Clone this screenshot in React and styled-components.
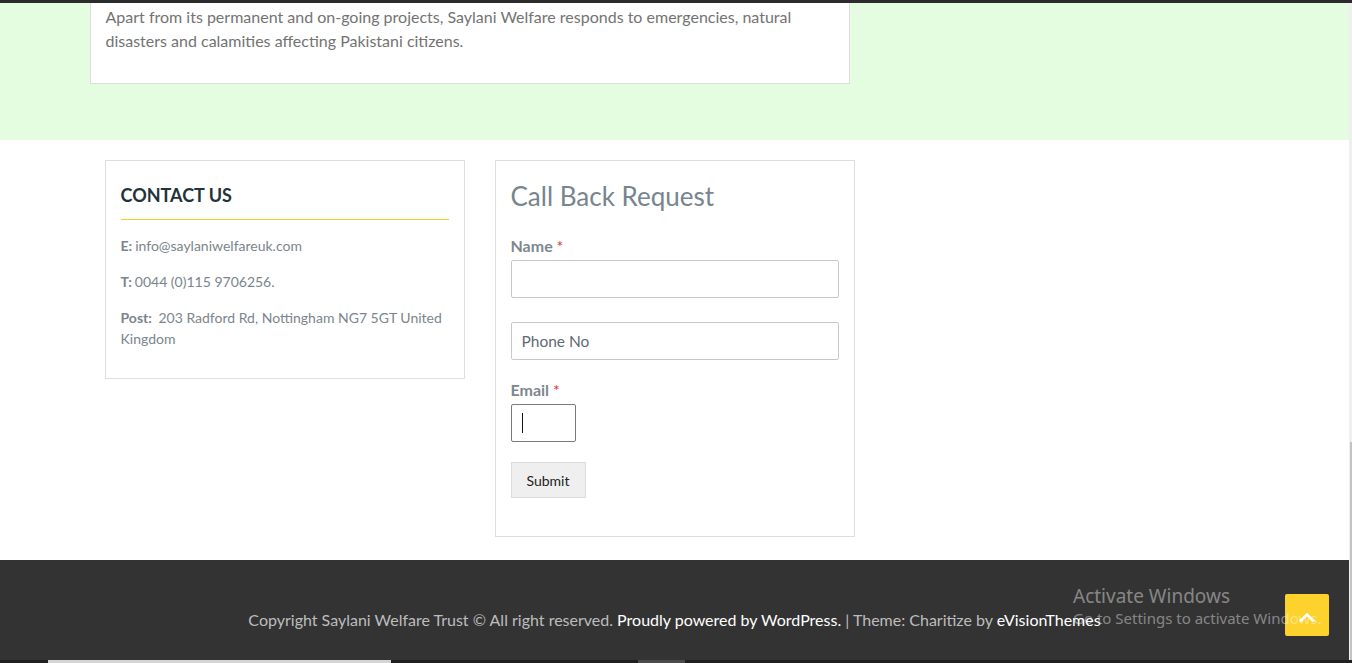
import React from "react";
import styled, { createGlobalStyle } from "styled-components";

const GlobalStyle = createGlobalStyle`
  html, body {
    margin: 0;
    padding: 0;
    overflow: hidden;
    background: #fff;
  }
  body {
    font-family: Lato, "Open Sans", sans-serif;
  }
  * { box-sizing: border-box; }
`;

const Page = styled.div`
  width: 1352px;
  height: 663px;
  display: flex;
  flex-direction: column;
  background: #2d2d2d;
`;

const TopStrip = styled.div`
  height: 3px;
  background: #2b2b2b;
`;

const Middle = styled.div`
  display: flex;
  height: 657px;
`;

const Content = styled.div`
  width: 1349px;
  display: flex;
  flex-direction: column;
`;

const ScrollTrack = styled.div`
  width: 3px;
  background: #efefef;
  display: flex;
  flex-direction: column;
  justify-content: flex-end;
`;

const ScrollThumb = styled.div`
  height: 218px;
  width: 2px;
  margin-left: 1px;
  background: #c3c3c3;
`;

const GreenSection = styled.section`
  background: #e4fde1;
  height: 137px;
`;

const Container = styled.div`
  width: 1170px;
  margin: 0 auto;
`;

const AboutCard = styled.div`
  width: 760px;
  background: #fff;
  border: 1px solid #dedede;
  border-top: none;
  padding: 2px 16px 30px 15px;
`;

const AboutText = styled.p`
  margin: 0;
  font-size: 16px;
  line-height: 24px;
  color: #737373;
`;

const WhiteSection = styled.section`
  background: #fff;
  height: 420px;
  padding-top: 20px;
`;

const Row = styled.div`
  display: flex;
  gap: 30px;
  padding-left: 15px;
  align-items: flex-start;
`;

const Card = styled.div`
  width: 360px;
  border: 1px solid #dedede;
  background: #fff;
  padding: ${(p) => p.$pad};
`;

const WidgetTitle = styled.h2`
  margin: 0;
  font-size: 18px;
  font-weight: 700;
  line-height: 28px;
  color: #24323b;
  padding-bottom: 10px;
  border-bottom: 1px solid #f3cf2b;
`;

const InfoList = styled.div`
  padding-top: 15px;
  display: flex;
  flex-direction: column;
  gap: 15px;
`;

const Info = styled.p`
  margin: 0;
  font-size: 14px;
  line-height: 21px;
  color: #7b858c;
`;

const InfoKey = styled.b`
  font-weight: 700;
  margin-right: 3px;
`;

const FormTitle = styled.h3`
  margin: 0 0 23px;
  font-size: 26px;
  font-weight: 400;
  line-height: 32px;
  color: #76858f;
`;

const Form = styled.form`
  display: flex;
  flex-direction: column;
  align-items: flex-start;
`;

const Label = styled.label`
  font-size: 16px;
  font-weight: 700;
  line-height: 21px;
  color: #7e878e;
  margin-bottom: 4px;
`;

const Req = styled.span`
  color: #e0312e;
  font-weight: 400;
`;

const Field = styled.div`
  position: relative;
  width: ${(p) => p.$w};
  margin-bottom: ${(p) => p.$mb};
`;

const Input = styled.input`
  display: block;
  width: 100%;
  height: 38px;
  border: 1px solid ${(p) => (p.$focus ? "#7a7a7a" : "#c9c9c9")};
  border-radius: 2px;
  padding: 0 10px;
  font-family: Lato, sans-serif;
  font-size: 15.5px;
  color: #555;
  background: #fff;
  outline: none;
  &::placeholder {
    color: #5f6a72;
  }
`;

const Caret = styled.span`
  position: absolute;
  left: 11px;
  top: 9px;
  width: 1px;
  height: 20px;
  background: #111;
`;

const SubmitButton = styled.button`
  height: 36px;
  width: 75px;
  padding: 0;
  background: #efefef;
  border: 1px solid #dcdcdc;
  font-family: Lato, sans-serif;
  font-size: 14px;
  color: #222;
`;

const Footer = styled.footer`
  position: relative;
  height: 100px;
  background: #333;
  padding-top: 48px;
  text-align: center;
  font-size: 16px;
  line-height: 24px;
  color: #bdbdbd;
`;

const White = styled.span`
  color: #fff;
`;

const Watermark = styled.div`
  position: absolute;
  left: 1073px;
  top: 27px;
  z-index: 2;
  font-family: "Noto Sans", "Open Sans", sans-serif;
  color: rgba(255, 255, 255, 0.42);
  text-align: left;
  line-height: 1;
  pointer-events: none;
`;

const WmTitle = styled.div`
  font-size: 19px;
  margin-bottom: 5px;
`;

const WmSub = styled.div`
  font-size: 15px;
`;

const ToTop = styled.div`
  position: absolute;
  left: 1285px;
  top: 34px;
  width: 44px;
  height: 42px;
  border-radius: 2px;
  background: #fdd22c;
  display: flex;
  align-items: center;
  justify-content: center;
  padding-top: 4px;
`;

const BottomStrip = styled.div`
  height: 3px;
  display: flex;
  background: #1f1f1f;
`;

const StripPart = styled.div`
  width: ${(p) => p.$w}px;
  margin-left: ${(p) => p.$ml}px;
  background: ${(p) => p.$c};
`;

export default function App() {
  return (
    <>
      <GlobalStyle />
      <Page>
        <TopStrip />
        <Middle>
          <Content>
            <GreenSection>
              <Container>
                <AboutCard>
                  <AboutText>
                    Apart from its permanent and on-going projects, Saylani Welfare responds to emergencies, natural
                    disasters and calamities affecting Pakistani citizens.
                  </AboutText>
                </AboutCard>
              </Container>
            </GreenSection>

            <WhiteSection>
              <Container>
                <Row>
                  <Card $pad="20px 15px 29px">
                    <WidgetTitle>CONTACT US</WidgetTitle>
                    <InfoList>
                      <Info>
                        <InfoKey>E:</InfoKey>info@saylaniwelfareuk.com
                      </Info>
                      <Info>
                        <InfoKey>T:</InfoKey>0044 (0)115 9706256.
                      </Info>
                      <Info>
                        <InfoKey>Post:</InfoKey> 203 Radford Rd, Nottingham NG7 5GT United Kingdom
                      </Info>
                    </InfoList>
                  </Card>

                  <Card $pad="19px 15px 38px">
                    <FormTitle>Call Back Request</FormTitle>
                    <Form onSubmit={(e) => e.preventDefault()}>
                      <Label>
                        Name <Req>*</Req>
                      </Label>
                      <Field $w="328px" $mb="24px">
                        <Input type="text" />
                      </Field>
                      <Field $w="328px" $mb="19px">
                        <Input type="text" placeholder="Phone No" />
                      </Field>
                      <Label>
                        Email <Req>*</Req>
                      </Label>
                      <Field $w="65px" $mb="20px">
                        <Input type="email" $focus />
                        <Caret />
                      </Field>
                      <SubmitButton type="submit">Submit</SubmitButton>
                    </Form>
                  </Card>
                </Row>
              </Container>
            </WhiteSection>

            <Footer>
              Copyright Saylani Welfare Trust © All right reserved. <White>Proudly powered by WordPress.</White> | Theme:
              Charitize by <White>eVisionThemes</White>
              <ToTop>
                <svg width="18" height="11" viewBox="0 0 18 11" fill="none">
                  <path d="M2 9.5 L9 2.5 L16 9.5" stroke="#fff" strokeWidth="2.6" />
                </svg>
              </ToTop>
              <Watermark>
                <WmTitle>Activate Windows</WmTitle>
                <WmSub>Go to Settings to activate Windows.</WmSub>
              </Watermark>
            </Footer>
          </Content>
          <ScrollTrack>
            <ScrollThumb />
          </ScrollTrack>
        </Middle>
        <BottomStrip>
          <StripPart $w={343} $ml={48} $c="#d4d4d4" />
          <StripPart $w={47} $ml={247} $c="#4a4a4a" />
        </BottomStrip>
      </Page>
    </>
  );
}
